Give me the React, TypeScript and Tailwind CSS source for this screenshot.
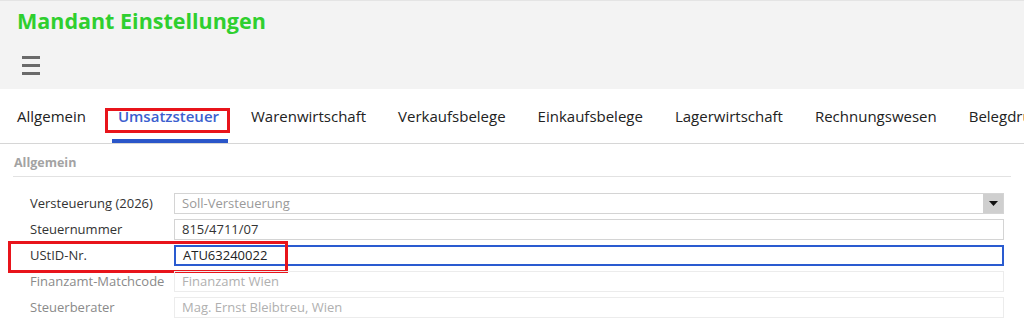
const tabs = [
  'Allgemein',
  'Umsatzsteuer',
  'Warenwirtschaft',
  'Verkaufsbelege',
  'Einkaufsbelege',
  'Lagerwirtschaft',
  'Rechnungswesen',
  'Belegdruck',
];

type Row = { label: string; value: string; kind: 'select' | 'text' | 'focus' | 'disabled' };

const rows: Row[] = [
  { label: 'Versteuerung (2026)', value: 'Soll-Versteuerung', kind: 'select' },
  { label: 'Steuernummer', value: '815/4711/07', kind: 'text' },
  { label: 'UStID-Nr.', value: 'ATU63240022', kind: 'focus' },
  { label: 'Finanzamt-Matchcode', value: 'Finanzamt Wien', kind: 'disabled' },
  { label: 'Steuerberater', value: 'Mag. Ernst Bleibtreu, Wien', kind: 'disabled' },
];

function FieldRow({ row }: { row: Row }) {
  const dim = row.kind === 'disabled';
  return (
    <div className="relative flex items-center h-[26px]">
      {row.kind === 'focus' && (
        <div className="absolute left-[-5px] top-[-2px] w-[280px] h-[32px] border-[3px] border-[#e8141b] pointer-events-none" />
      )}
      <div className={`w-[144px] shrink-0 pl-[17px] box-content text-[13px] ${dim ? 'text-[#8a8a8a]' : 'text-[#333]'}`}>
        {row.label}
      </div>
      <div
        className={`flex-1 flex items-center h-[21px] pl-[7px] text-[13px] ${
          row.kind === 'focus'
            ? 'border-2 border-[#2a5bd0] text-[#222]'
            : dim
              ? 'border border-[#ececec] text-[#b0b0b0]'
              : row.kind === 'select'
                ? 'border border-[#d4d4d4] text-[#9a9a9a]'
                : 'border border-[#d4d4d4] text-[#333]'
        }`}
      >
        <span className="flex-1">{row.value}</span>
        {row.kind === 'select' && (
          <span className="w-[20px] h-full bg-[#cfcfcf] flex items-center justify-center">
            <svg width="9" height="5" viewBox="0 0 9 5">
              <path d="M0 0h9L4.5 5z" fill="#111" />
            </svg>
          </span>
        )}
      </div>
    </div>
  );
}

export default function App() {
  return (
    <div className="w-[1024px] h-[330px] overflow-hidden bg-white" style={{ fontFamily: '"Open Sans", "Noto Sans", sans-serif' }}>
      <header className="bg-[#f3f3f3] h-[89px] border-t border-[#e4e4e4]">
        <h1 className="pl-[17px] pt-[5px] text-[21.5px] font-bold text-[#2fcf2f] leading-[30px]">Mandant Einstellungen</h1>
        <button className="ml-[22px] mt-[20px] flex flex-col gap-[5px]">
          <span className="block w-[18px] h-[3px] bg-[#6a6a6a]" />
          <span className="block w-[18px] h-[3px] bg-[#6a6a6a]" />
          <span className="block w-[18px] h-[3px] bg-[#6a6a6a]" />
        </button>
      </header>

      <nav className="flex items-end h-[55px] pl-[1px] border-b border-[#d6d6d6] whitespace-nowrap">
        {tabs.map((t) => {
          const active = t === 'Umsatzsteuer';
          return (
            <div key={t} className="relative px-[16px] h-full flex items-start pt-[17px]">
              {active && (
                <div className="absolute left-[3px] right-[5px] top-[19px] h-[25px] border-[3px] border-[#e8141b]" />
              )}
              <span className={`text-[15px] leading-[20px] ${active ? 'text-[#3c5fcf] font-semibold' : 'text-[#222]'}`}>{t}</span>
              {active && <div className="absolute left-[10px] right-[7px] bottom-0 h-[4px] bg-[#2a56c9]" />}
            </div>
          );
        })}
      </nav>

      <section className="px-[13px] pt-[10px]">
        <div className="text-[12.5px] font-bold text-[#a3a3a3] pl-[1px] pb-[3px] border-b border-[#e2e2e2]">Allgemein</div>
        <div className="pt-[14px] pr-[7px] flex flex-col">
          {rows.map((r) => (
            <FieldRow key={r.label} row={r} />
          ))}
        </div>
      </section>
    </div>
  );
}
